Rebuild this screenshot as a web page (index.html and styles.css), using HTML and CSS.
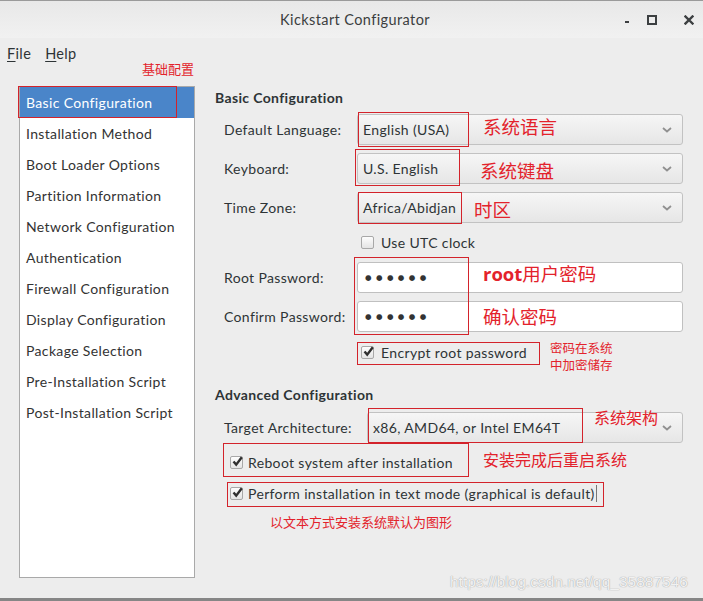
FILE: index.html
```html
<!DOCTYPE html>
<html>
<head>
<meta charset="utf-8">
<link rel="stylesheet" href="styles.css">
</head>
<body>
<div class="window">
  <header class="titlebar">
    <div class="title">Kickstart Configurator</div>
    <div class="wm">
      <svg class="wm-min" width="10" height="10" viewBox="0 0 10 10"><rect x="3" y="6" width="4" height="2" fill="#3c3f41"/></svg>
      <svg class="wm-max" width="10" height="10" viewBox="0 0 10 10"><rect x="1" y="1" width="8" height="8" fill="none" stroke="#3c3f41" stroke-width="2"/></svg>
      <svg class="wm-close" width="10" height="10" viewBox="0 0 10 10"><path d="M1.5 1.5 L8.5 8.5 M8.5 1.5 L1.5 8.5" stroke="#3c3f41" stroke-width="2.4" stroke-linecap="square"/></svg>
    </div>
  </header>

  <nav class="menubar">
    <span class="menu"><u>F</u>ile</span>
    <span class="menu"><u>H</u>elp</span>
  </nav>

  <div class="main">
    <aside class="sidebar">
      <ul class="list">
        <li class="item selected">Basic Configuration</li>
        <li class="item">Installation Method</li>
        <li class="item">Boot Loader Options</li>
        <li class="item">Partition Information</li>
        <li class="item">Network Configuration</li>
        <li class="item">Authentication</li>
        <li class="item">Firewall Configuration</li>
        <li class="item">Display Configuration</li>
        <li class="item">Package Selection</li>
        <li class="item">Pre-Installation Script</li>
        <li class="item">Post-Installation Script</li>
      </ul>
    </aside>

    <section class="content">
      <h2 class="section-title">Basic Configuration</h2>
      <div class="form basic">
        <label class="lbl">Default Language:</label>
        <div class="combo"><span>English (USA)</span><svg class="chev" width="10" height="6" viewBox="0 0 10 6"><path d="M1 1 L5 4.5 L9 1" fill="none" stroke="#909090" stroke-width="1.8"/></svg></div>

        <label class="lbl">Keyboard:</label>
        <div class="combo"><span>U.S. English</span><svg class="chev" width="10" height="6" viewBox="0 0 10 6"><path d="M1 1 L5 4.5 L9 1" fill="none" stroke="#909090" stroke-width="1.8"/></svg></div>

        <label class="lbl">Time Zone:</label>
        <div class="combo"><span>Africa/Abidjan</span><svg class="chev" width="10" height="6" viewBox="0 0 10 6"><path d="M1 1 L5 4.5 L9 1" fill="none" stroke="#909090" stroke-width="1.8"/></svg></div>

        <span class="empty"></span>
        <div class="check utc"><span class="box"></span><span>Use UTC clock</span></div>

        <label class="lbl">Root Password:</label>
        <div class="entry"><span class="dots">●●●●●●</span></div>

        <label class="lbl">Confirm Password:</label>
        <div class="entry"><span class="dots">●●●●●●</span></div>

        <span class="empty"></span>
        <div class="check enc"><span class="box checked"><svg width="13" height="13" viewBox="0 0 13 13"><path d="M2.5 6.5 L5.2 9.6 L10.8 2.2" fill="none" stroke="#2f2f2f" stroke-width="2.4"/></svg></span><span>Encrypt root password</span></div>
      </div>

      <h2 class="section-title adv">Advanced Configuration</h2>
      <div class="form advanced">
        <label class="lbl">Target Architecture:</label>
        <div class="combo"><span>x86, AMD64, or Intel EM64T</span><svg class="chev" width="10" height="6" viewBox="0 0 10 6"><path d="M1 1 L5 4.5 L9 1" fill="none" stroke="#909090" stroke-width="1.8"/></svg></div>
      </div>
      <div class="check row reboot"><span class="box checked"><svg width="13" height="13" viewBox="0 0 13 13"><path d="M2.5 6.5 L5.2 9.6 L10.8 2.2" fill="none" stroke="#2f2f2f" stroke-width="2.4"/></svg></span><span>Reboot system after installation</span></div>
      <div class="check row perform"><span class="box checked"><svg width="13" height="13" viewBox="0 0 13 13"><path d="M2.5 6.5 L5.2 9.6 L10.8 2.2" fill="none" stroke="#2f2f2f" stroke-width="2.4"/></svg></span><span class="focus">Perform installation in text mode (graphical is default)</span></div>
    </section>
  </div>

  <!-- annotations drawn over the screenshot -->
  <div class="rb rb-basic"></div>
  <div class="rb rb-lang"></div>
  <div class="rb rb-kbd"></div>
  <div class="rb rb-tz"></div>
  <div class="rb rb-pw"></div>
  <div class="rb rb-enc"></div>
  <div class="rb rb-arch"></div>
  <div class="rb rb-reboot"></div>
  <div class="rb rb-perform"></div>

  <div class="note n-basic">基础配置</div>
  <div class="note big n-lang">系统语言</div>
  <div class="note big n-kbd">系统键盘</div>
  <div class="note big n-tz">时区</div>
  <div class="note big n-root"><b>root</b>用户密码</div>
  <div class="note big n-confirm">确认密码</div>
  <div class="note small n-enc">密码在系统<br>中加密储存</div>
  <div class="note mid n-arch">系统架构</div>
  <div class="note mid n-reboot">安装完成后重启系统</div>
  <div class="note n-text">以文本方式安装系统默认为图形</div>

  <div class="watermark">https://blog.csdn.net/qq_35887546</div>
</div>
</body>
</html>
```

FILE: styles.css
```css
* { box-sizing: border-box; }
html, body { margin: 0; padding: 0; }
body {
  width: 703px;
  height: 601px;
  overflow: hidden;
  background: #ededed;
  font-family: "Lato", "Open Sans", sans-serif;
  font-size: 14px;
  letter-spacing: 0.35px;
  color: #2e3436;
}
.window {
  position: relative;
  width: 703px;
  height: 601px;
  background: #ededed;
  border-top: 1px solid #9a9a9a;
  border-bottom: 3px solid #868686;
}

/* title bar */
.titlebar {
  height: 37px;
  display: grid;
  grid-template-columns: 1fr auto 1fr;
  align-items: center;
  background: linear-gradient(#e8e8e8, #f1f1f1);
}
.title {
  grid-column: 2;
  padding-left: 7px;
  font-size: 14.5px;
  color: #3b3e40;
  letter-spacing: 0.4px;
}
.wm {
  grid-column: 3;
  justify-self: end;
  display: flex;
  align-items: center;
  padding-right: 9px;
}
.wm svg { display: block; }
.wm-min { margin-right: 15px; }
.wm-max { margin-right: 27px; }

/* menu bar */
.menubar {
  height: 30px;
  display: flex;
  align-items: center;
  gap: 14px;
  padding-left: 7px;
  font-size: 14.5px;
  color: #2e3436;
}
.menu u { text-decoration-thickness: 1px; text-underline-offset: 2px; }

/* main layout */
.main {
  display: flex;
  padding: 18px 20px 0 19px;
}
.sidebar { width: 176px; flex: none; }
.list {
  list-style: none;
  margin: 0;
  padding: 0;
  height: 492px;
  background: #fff;
  border: 1px solid #a9a9a9;
}
.item {
  height: 31px;
  line-height: 31px;
  padding-left: 6px;
  color: #333;
  white-space: nowrap;
}
.item.selected {
  background: #4a85c9;
  color: #fff;
}

.content {
  flex: 1;
  margin-left: 20px;
}
.section-title {
  margin: 2px 0 0;
  font-size: 14px;
  line-height: 20px;
  font-weight: bold;
  color: #2e3436;
}
.section-title.adv { margin-top: 21px; }

.form {
  display: grid;
  margin-left: 9px;
  align-items: center;
  row-gap: 8px;
}
.form.basic {
  margin-top: 6px;
  grid-template-columns: 133px 1fr;
  grid-template-rows: 31px 31px 31px 23px 31px 31px 24px;
}
.form.advanced {
  margin-top: 7px;
  grid-template-columns: 143px 1fr;
  grid-template-rows: 31px;
}
.lbl { color: #2e3436; white-space: nowrap; }

.combo {
  height: 31px;
  display: flex;
  align-items: center;
  justify-content: space-between;
  padding: 0 10px 0 5px;
  border: 1px solid #c2c2c2;
  border-radius: 3px;
  background: linear-gradient(#f6f6f6, #e6e6e6);
  color: #2e3436;
}
.chev { display: block; }
.entry {
  height: 31px;
  display: flex;
  align-items: center;
  padding-left: 7px;
  border: 1px solid #c0c0c0;
  border-radius: 3px;
  background: #fff;
}
.dots {
  font-family: "DejaVu Sans", sans-serif;
  font-size: 7.5px;
  letter-spacing: 4.4px;
  color: #333;
}

.check {
  display: flex;
  align-items: center;
  gap: 7px;
  white-space: nowrap;
}
.check.utc, .check.enc { margin-left: 4px; }
.check.enc { height: 24px; }
.box {
  width: 13px;
  height: 13px;
  flex: none;
  border: 1px solid #a8a8a8;
  border-radius: 2px;
  background: linear-gradient(#fdfdfd, #e4e4e4);
  position: relative;
}
.box svg { position: absolute; left: 0; top: -2px; }
.check.row {
  height: 24px;
  margin-left: 15px;
  gap: 5px;
}
.check.reboot { margin-top: 7px; }
.check.perform { margin-top: 7px; }
.focus { border-right: 1px solid #777; padding-right: 1px; }

/* red annotations over the screenshot */
.rb {
  position: absolute;
  border: 1px solid #d3232b;
}
.rb-basic { left: 18px; top: 85px; width: 159px; height: 32px; }
.rb-lang { left: 358px; top: 111px; width: 111px; height: 35px; }
.rb-kbd { left: 355px; top: 148px; width: 105px; height: 37px; }
.rb-tz { left: 358px; top: 191px; width: 104px; height: 32px; }
.rb-pw { left: 354px; top: 256px; width: 115px; height: 78px; }
.rb-enc { left: 357px; top: 341px; width: 183px; height: 23px; }
.rb-arch { left: 368px; top: 407px; width: 215px; height: 35px; }
.rb-reboot { left: 223px; top: 442px; width: 246px; height: 34px; }
.rb-perform { left: 227px; top: 481px; width: 377px; height: 25px; }

.note {
  position: absolute;
  font-family: "Noto Sans CJK SC", sans-serif;
  color: #e3222b;
  font-size: 13px;
  line-height: 16px;
  letter-spacing: 0;
  white-space: nowrap;
}
.note.big { font-size: 18.5px; line-height: 20px; }
.note.mid { font-size: 16px; line-height: 18px; }
.note.small { font-size: 12.5px; line-height: 17px; }
.note b { font-family: "Open Sans", sans-serif; font-weight: bold; }
.n-basic { left: 142px; top: 60px; }
.n-lang { left: 483px; top: 115px; }
.n-kbd { left: 480px; top: 159px; }
.n-tz { left: 474px; top: 198px; }
.n-root { left: 483px; top: 262px; }
.n-confirm { left: 483px; top: 305px; }
.n-enc { left: 550px; top: 338px; }
.n-arch { left: 594px; top: 407px; }
.n-reboot { left: 483px; top: 449px; }
.n-text { left: 270px; top: 513px; }

.watermark {
  position: absolute;
  left: 450px;
  top: 572px;
  font-family: "Liberation Sans", sans-serif;
  font-size: 15.5px;
  letter-spacing: 0;
  color: rgba(255, 255, 255, 0.85);
  text-shadow: 0 0 1px #a8a8a8, 0 0 1px #b0b0b0;
}
```
